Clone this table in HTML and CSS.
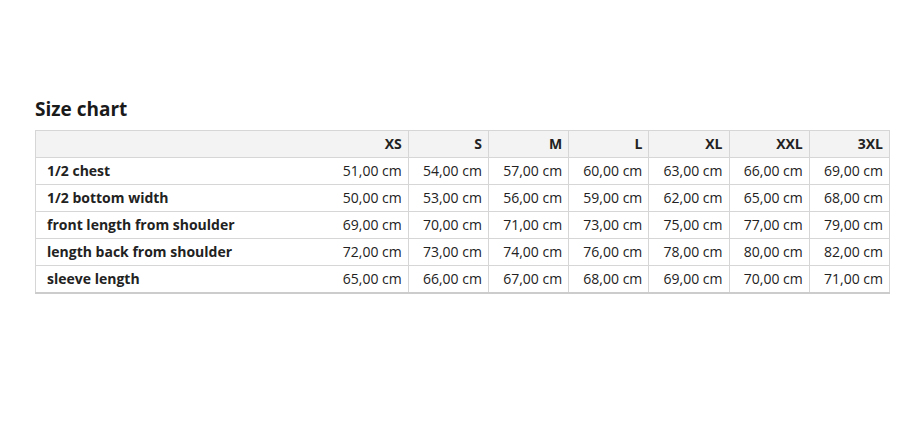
FILE: index.html
```html
<!DOCTYPE html>
<html lang="en">
<head>
<meta charset="utf-8">
<title>Size chart</title>
<link rel="stylesheet" href="styles.css">
</head>
<body>
<section class="size-chart">
  <h2 class="title">Size chart</h2>
  <table class="chart">
    <thead>
      <tr>
        <th class="label"></th>
        <th>XS</th><th>S</th><th>M</th><th>L</th><th>XL</th><th>XXL</th><th>3XL</th>
      </tr>
    </thead>
    <tbody>
      <tr>
        <th class="label">1/2 chest</th>
        <td>51,00 cm</td><td>54,00 cm</td><td>57,00 cm</td><td>60,00 cm</td><td>63,00 cm</td><td>66,00 cm</td><td>69,00 cm</td>
      </tr>
      <tr>
        <th class="label">1/2 bottom width</th>
        <td>50,00 cm</td><td>53,00 cm</td><td>56,00 cm</td><td>59,00 cm</td><td>62,00 cm</td><td>65,00 cm</td><td>68,00 cm</td>
      </tr>
      <tr>
        <th class="label">front length from shoulder</th>
        <td>69,00 cm</td><td>70,00 cm</td><td>71,00 cm</td><td>73,00 cm</td><td>75,00 cm</td><td>77,00 cm</td><td>79,00 cm</td>
      </tr>
      <tr>
        <th class="label">length back from shoulder</th>
        <td>72,00 cm</td><td>73,00 cm</td><td>74,00 cm</td><td>76,00 cm</td><td>78,00 cm</td><td>80,00 cm</td><td>82,00 cm</td>
      </tr>
      <tr>
        <th class="label">sleeve length</th>
        <td>65,00 cm</td><td>66,00 cm</td><td>67,00 cm</td><td>68,00 cm</td><td>69,00 cm</td><td>70,00 cm</td><td>71,00 cm</td>
      </tr>
    </tbody>
  </table>
</section>
</body>
</html>
```

FILE: styles.css
```css
html, body {
  margin: 0;
  padding: 0;
  background: #ffffff;
}

body {
  font-family: "Open Sans", "Liberation Sans", sans-serif;
  color: #222222;
}

.size-chart {
  padding: 95px 0 0 35px;
}

.title {
  margin: 0 0 7px 0;
  font-size: 19px;
  line-height: 28px;
  font-weight: 700;
  color: #1a1a1a;
}

.chart {
  border-collapse: collapse;
  width: 855px;
  table-layout: fixed;
  font-size: 14px;
  line-height: 20px;
  border-left: 1px solid #d6d6d6;
  border-top: 1px solid #d6d6d6;
  border-bottom: 2px solid #cccccc;
}

.chart th,
.chart td {
  padding: 3px 6px;
  text-align: right;
  border-bottom: 1px solid #d6d6d6;
  border-right: 1px solid #d6d6d6;
  white-space: nowrap;
  font-weight: 400;
}

.chart thead th {
  background: #f3f3f3;
  font-weight: 700;
}

.chart tbody tr:last-child th,
.chart tbody tr:last-child td {
  border-bottom: 2px solid #cccccc;
}

.chart th.label {
  width: 275px;
  text-align: left;
  padding-left: 11px;
  font-weight: 700;
  border-right: none;
}
```
